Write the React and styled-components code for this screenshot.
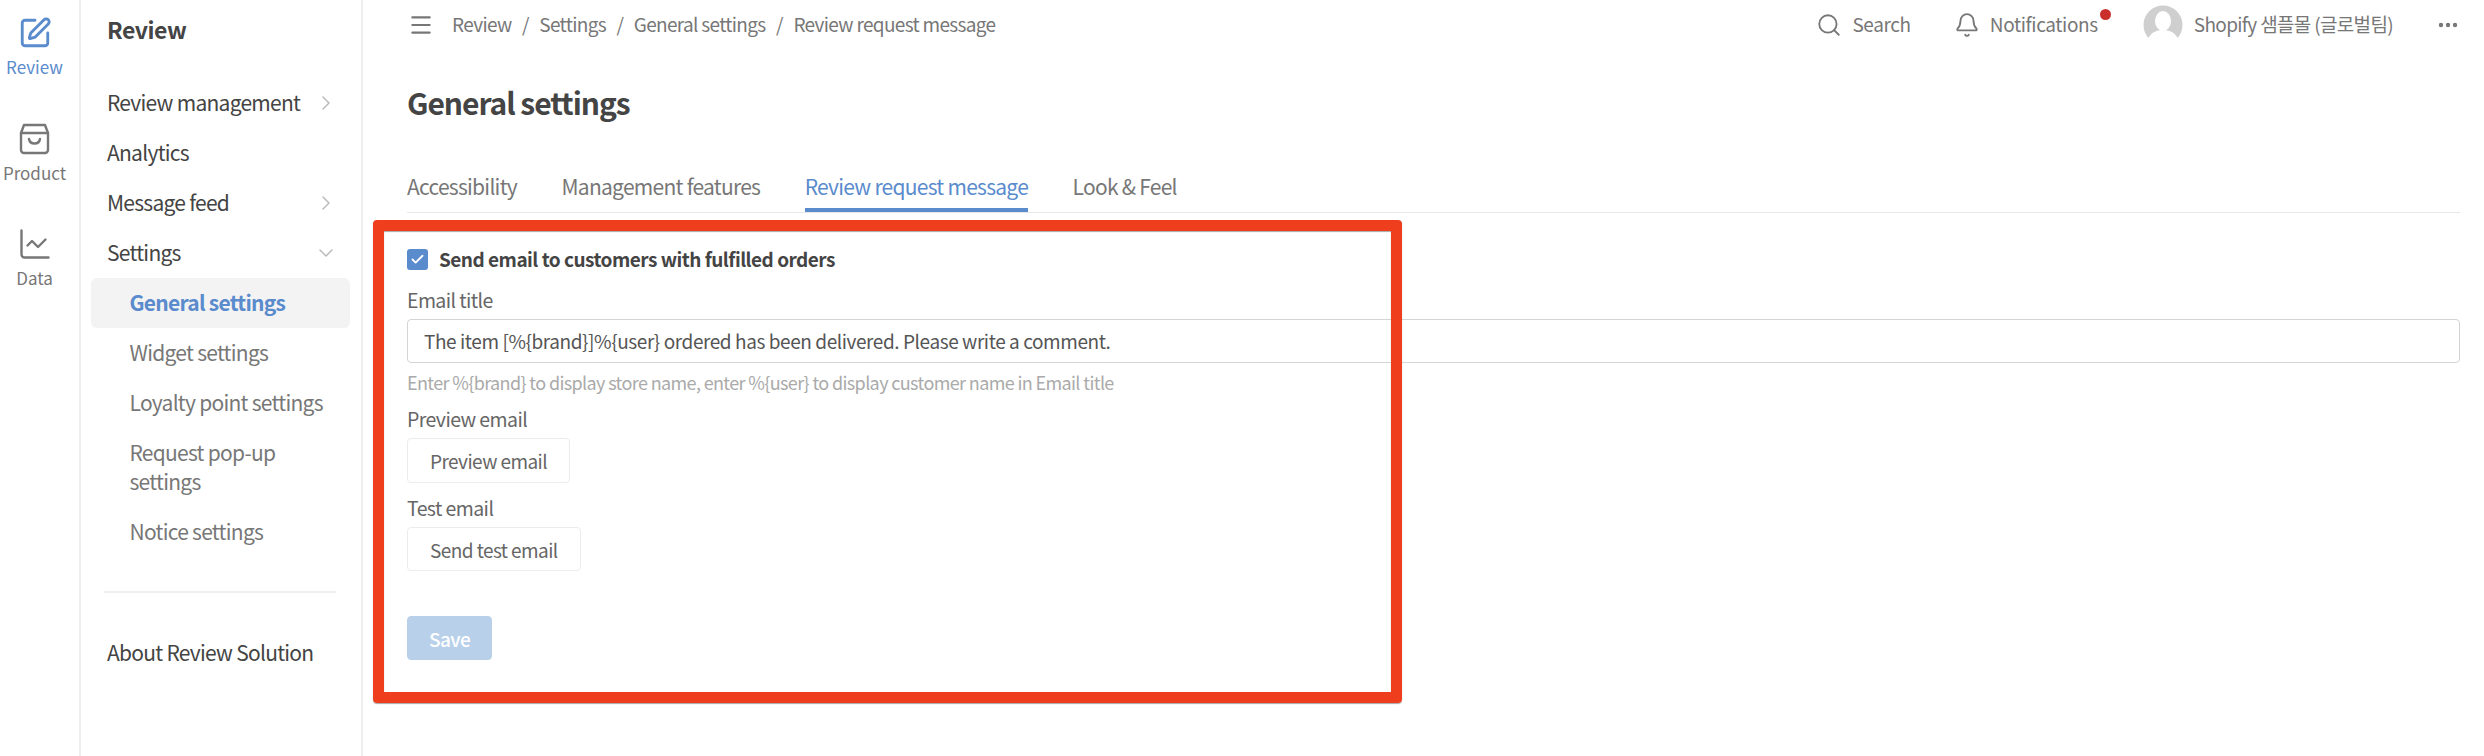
import React from "react";
import styled, { createGlobalStyle } from "styled-components";
import {
  SquarePen,
  ChartLine,
  ChevronRight,
  ChevronDown,
  Menu,
  Search,
  Bell,
  Ellipsis,
  Check
} from "lucide-react";

const BLUE = "#5a8bcd";

const GlobalStyle = createGlobalStyle`
  html, body {
    margin: 0;
    padding: 0;
    background: #fff;
  }
  body {
    font-family: "Noto Sans CJK KR", "Noto Sans", sans-serif;
    color: #444;
  }
  * {
    box-sizing: border-box;
  }
`;

const Page = styled.div`
  position: relative;
  display: flex;
  width: 2484px;
  height: 756px;
  overflow: hidden;
`;

const Rail = styled.nav`
  flex: 0 0 81px;
  border-right: 2px solid #eeeeee;
  padding: 15px 10px 0 0;
`;

const RailItem = styled.div`
  display: flex;
  flex-direction: column;
  align-items: center;
  height: 105.5px;
  color: ${props => (props.$active ? BLUE : "#777")};
`;

const RailIcon = styled.span`
  display: flex;
  align-items: center;
  justify-content: center;
  height: 36px;
`;

const RailLabel = styled.span`
  font-size: 17px;
  line-height: 24px;
  margin-top: 4px;
`;

const Sidebar = styled.aside`
  flex: 0 0 282px;
  border-right: 2px solid #eeeeee;
`;

const SideTitle = styled.h2`
  margin: 0 0 20px;
  padding-left: 26px;
  font-size: 23px;
  font-weight: 700;
  line-height: 58px;
  letter-spacing: -0.02em;
  color: #444;
`;

const SideItem = styled.div`
  display: flex;
  align-items: center;
  justify-content: space-between;
  margin: 0 11px 0 10px;
  padding: 10px ${props => (props.$sub ? "25px" : "12px")} 11px ${props => (props.$sub ? "38.5px" : "16px")};
  border-radius: 6px;
  font-size: 21px;
  line-height: 29px;
  letter-spacing: -0.035em;
  font-weight: ${props => (props.$active ? 700 : 400)};
  color: ${props => (props.$active ? BLUE : props.$sub ? "#777" : "#444")};
  background: ${props => (props.$active ? "#f3f3f3" : "transparent")};
  svg {
    flex: none;
    margin: -4px 0;
    color: #bbb;
  }
`;

const SideDivider = styled.hr`
  margin: 34px 25px 35px 23px;
  border: 0;
  border-top: 2px solid #f0f0f0;
`;

const Main = styled.main`
  flex: 1;
  min-width: 0;
  padding: 0 24px 0 44px;
`;

const TopBar = styled.header`
  display: flex;
  align-items: center;
  height: 50px;
  color: #777;
`;

const MenuButton = styled.span`
  display: flex;
  margin: 0 18px 0 1px;
  color: #777;
`;

const TopText = styled.span`
  padding-bottom: 3px;
  font-size: 19px;
  letter-spacing: ${props => (props.$loose ? "-0.02em" : "-0.035em")};
`;

const Crumbs = styled.div`
  display: flex;
  gap: 10.5px;
  flex: 1;
`;

const TopAction = styled.div`
  position: relative;
  display: flex;
  align-items: center;
  gap: ${props => props.$inner || 10}px;
  margin-left: ${props => props.$gap}px;
`;

const RedDot = styled.span`
  position: absolute;
  top: -1px;
  right: -13px;
  width: 11px;
  height: 11px;
  border-radius: 50%;
  background: #c9302c;
`;

const Heading = styled.h1`
  margin: 32px 0 0;
  font-size: 30px;
  font-weight: 700;
  line-height: 40px;
  letter-spacing: -0.035em;
  color: #444;
`;

const Tabs = styled.div`
  display: flex;
  gap: 44.5px;
  margin-top: 38px;
  border-bottom: 1px solid #e8e8e8;
`;

const Tab = styled.div`
  padding: 11px 0 7px;
  font-size: 21px;
  line-height: 30px;
  letter-spacing: -0.035em;
  color: ${props => (props.$active ? BLUE : "#777")};
  border-bottom: 4px solid ${props => (props.$active ? BLUE : "transparent")};
`;

const CheckRow = styled.label`
  display: flex;
  align-items: center;
  gap: 11px;
  margin-top: 31px;
  font-size: 19px;
  font-weight: 700;
  line-height: 30px;
  letter-spacing: -0.027em;
  color: #444;
`;

const CheckBox = styled.span`
  display: flex;
  align-items: center;
  justify-content: center;
  width: 21px;
  height: 21px;
  border-radius: 3px;
  background: ${BLUE};
  color: #fff;
`;

const FieldLabel = styled.div`
  margin-top: ${props => props.$top}px;
  font-size: 19.5px;
  line-height: 30px;
  letter-spacing: -0.03em;
  color: #666;
`;

const TextField = styled.div`
  height: 44px;
  margin-top: 4px;
  padding: 0 16px;
  border: 1px solid #d4d4d4;
  border-radius: 4px;
  font-size: 19px;
  line-height: 42px;
  letter-spacing: -0.022em;
  color: #555;
`;

const Hint = styled.div`
  margin-top: 6px;
  font-size: 18px;
  line-height: 26px;
  letter-spacing: -0.035em;
  color: #aaa;
`;

const Button = styled.button`
  display: block;
  height: ${props => props.$height || 44}px;
  margin-top: ${props => props.$top}px;
  padding: 0 ${props => (props.$primary ? "21px" : "22px")};
  border: 1px solid ${props => (props.$primary ? "#b9d0ea" : "#ececec")};
  border-radius: 4px;
  background: ${props => (props.$primary ? "#b9d0ea" : "#fff")};
  color: ${props => (props.$primary ? "#fff" : "#666")};
  font-family: inherit;
  font-size: 19px;
  letter-spacing: -0.03em;
  font-weight: ${props => (props.$primary ? 500 : 400)};
`;

// annotation drawn over the screenshot
const Highlight = styled.div`
  position: absolute;
  left: 373px;
  top: 220px;
  width: 1029px;
  height: 483px;
  border: 11px solid #ef3e1e;
  border-radius: 4px;
  box-shadow: 0 1px 1px rgba(0, 0, 0, 0.35), inset 0 1px 1px rgba(0, 0, 0, 0.35);
  pointer-events: none;
`;

const BagIcon = () => (
  <svg width="31" height="32" viewBox="0 0 31 32" fill="none" stroke="currentColor" strokeWidth="2.4" strokeLinecap="round" strokeLinejoin="round">
    <path d="M5 2h21l3 8v17a3 3 0 0 1-3 3H5a3 3 0 0 1-3-3V10z" />
    <path d="M2 10h27" />
    <path d="M10 16c1 6 10 6 11 0" />
  </svg>
);

const Avatar = () => (
  <svg width="40" height="40" viewBox="0 0 40 40">
    <circle cx="20" cy="20" r="19.5" fill="#cfcfcf" />
    <ellipse cx="20" cy="16" rx="8" ry="10" fill="#fff" />
    <path d="M5 34c3-7 9-9 15-9s12 2 15 9a19.5 19.5 0 0 1-30 0z" fill="#fff" />
  </svg>
);

const SIDE_ITEMS = [
  { label: "Review management", icon: "right" },
  { label: "Analytics" },
  { label: "Message feed", icon: "right" },
  { label: "Settings", icon: "down" },
  { label: "General settings", sub: true, active: true },
  { label: "Widget settings", sub: true },
  { label: "Loyalty point settings", sub: true },
  { label: "Request pop-up settings", sub: true },
  { label: "Notice settings", sub: true }
];

const App = () => (
  <Page>
    <GlobalStyle />
    <Rail>
      <RailItem $active>
        <RailIcon>
          <SquarePen size={34} strokeWidth={2} />
        </RailIcon>
        <RailLabel>Review</RailLabel>
      </RailItem>
      <RailItem>
        <RailIcon>
          <BagIcon />
        </RailIcon>
        <RailLabel>Product</RailLabel>
      </RailItem>
      <RailItem>
        <RailIcon>
          <ChartLine size={36} strokeWidth={1.6} />
        </RailIcon>
        <RailLabel>Data</RailLabel>
      </RailItem>
    </Rail>

    <Sidebar>
      <SideTitle>Review</SideTitle>
      {SIDE_ITEMS.map(item => (
        <SideItem key={item.label} $sub={item.sub} $active={item.active}>
          <span>{item.label}</span>
          {item.icon === "right" && <ChevronRight size={24} strokeWidth={1.5} />}
          {item.icon === "down" && <ChevronDown size={24} strokeWidth={1.5} />}
        </SideItem>
      ))}
      <SideDivider />
      <SideItem>
        <span>About Review Solution</span>
      </SideItem>
    </Sidebar>

    <Main>
      <TopBar>
        <MenuButton>
          <Menu size={26} strokeWidth={2} />
        </MenuButton>
        <Crumbs>
          <TopText>Review</TopText>
          <TopText>/</TopText>
          <TopText>Settings</TopText>
          <TopText>/</TopText>
          <TopText>General settings</TopText>
          <TopText>/</TopText>
          <TopText>Review request message</TopText>
        </Crumbs>
        <TopAction>
          <Search size={26} strokeWidth={1.7} />
          <TopText $loose>Search</TopText>
        </TopAction>
        <TopAction $gap={43}>
          <Bell size={26} strokeWidth={1.7} />
          <TopText $loose>Notifications</TopText>
          <RedDot />
        </TopAction>
        <TopAction $gap={45} $inner={11}>
          <Avatar />
          <TopText>Shopify 샘플몰 (글로벌팀)</TopText>
        </TopAction>
        <TopAction $gap={43}>
          <Ellipsis size={24} strokeWidth={2.4} />
        </TopAction>
      </TopBar>

      <Heading>General settings</Heading>

      <Tabs>
        <Tab>Accessibility</Tab>
        <Tab>Management features</Tab>
        <Tab $active>Review request message</Tab>
        <Tab>Look &amp; Feel</Tab>
      </Tabs>

      <CheckRow>
        <CheckBox>
          <Check size={15} strokeWidth={3} />
        </CheckBox>
        Send email to customers with fulfilled orders
      </CheckRow>

      <FieldLabel $top={11}>Email title</FieldLabel>
      <TextField>The item [%{"{brand}"}]%{"{user}"} ordered has been delivered. Please write a comment.</TextField>
      <Hint>Enter %{"{brand}"} to display store name, enter %{"{user}"} to display customer name in Email title</Hint>

      <FieldLabel $top={9}>Preview email</FieldLabel>
      <Button $top={4} $height={45}>Preview email</Button>

      <FieldLabel $top={10}>Test email</FieldLabel>
      <Button $top={4}>Send test email</Button>

      <Button $top={45} $primary>Save</Button>
    </Main>

    <Highlight />
  </Page>
);

export default App;
